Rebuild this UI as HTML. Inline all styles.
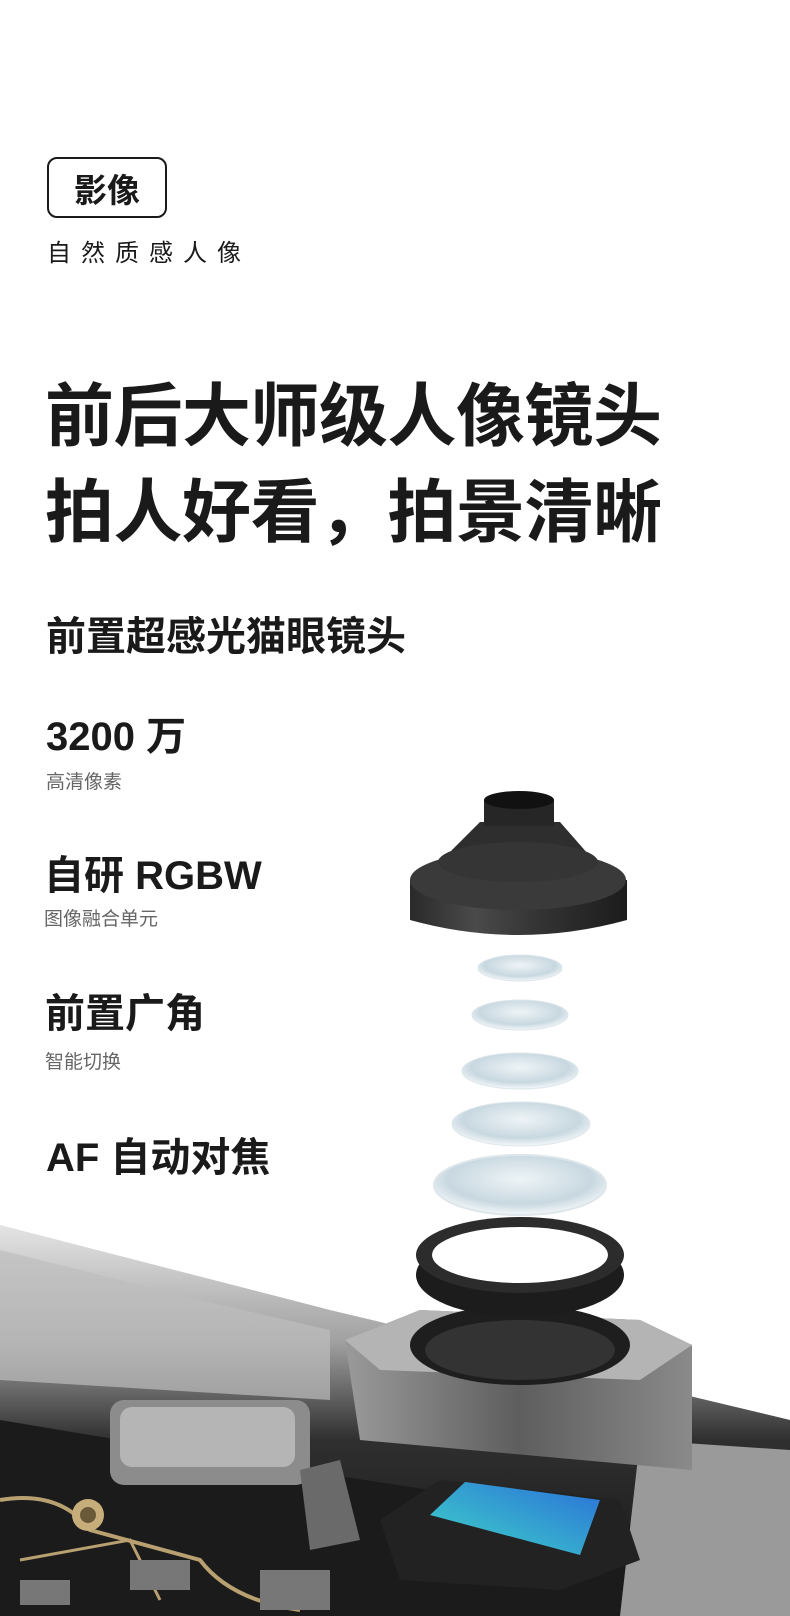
<!DOCTYPE html>
<html><head><meta charset="utf-8"><style>
*{margin:0;padding:0}
body{width:790px;height:1616px;background:#fff;position:relative;overflow:hidden;font-family:"Liberation Sans","Noto Sans CJK SC",sans-serif;color:#1a1a1a}
.a{position:absolute;white-space:nowrap;line-height:1}
.box{position:absolute;left:47px;top:157px;width:116px;height:57px;border:2.5px solid #1a1a1a;border-radius:10px;font-weight:700;font-size:33px;display:flex;align-items:center;justify-content:center}
svg{position:absolute;left:0;top:0}
</style></head><body>
<svg width="790" height="1616" viewBox="0 0 790 1616">
<defs>
<linearGradient id="pcb" x1="0" y1="0" x2="0" y2="1"><stop offset="0" stop-color="#e4e4e4"/><stop offset="0.3" stop-color="#a0a0a0"/><stop offset="0.55" stop-color="#2f2f2f"/><stop offset="1" stop-color="#151515"/></linearGradient>
<linearGradient id="barrel" x1="0" y1="0" x2="1" y2="0"><stop offset="0" stop-color="#2a2a2a"/><stop offset="0.3" stop-color="#4a4a4a"/><stop offset="0.6" stop-color="#333"/><stop offset="1" stop-color="#1c1c1c"/></linearGradient>
<linearGradient id="box" x1="0" y1="0" x2="1" y2="0"><stop offset="0" stop-color="#9a9a9a"/><stop offset="0.5" stop-color="#5e5e5e"/><stop offset="1" stop-color="#8a8a8a"/></linearGradient>
<linearGradient id="sens" x1="0" y1="1" x2="1" y2="0"><stop offset="0" stop-color="#3fd6c8"/><stop offset="1" stop-color="#2a6fd8"/></linearGradient>
<radialGradient id="lens" cx="0.5" cy="0.4" r="0.6"><stop offset="0" stop-color="#eef4f7"/><stop offset="0.7" stop-color="#c8d8e0"/><stop offset="1" stop-color="#f4f8fa"/></radialGradient>
</defs>
<polygon points="0,1225 330,1310 790,1420 790,1616 0,1616" fill="url(#pcb)"/>
<polygon points="0,1250 200,1300 330,1330 330,1400 0,1380" fill="#bdbdbd" opacity="0.7"/>
<polygon points="0,1420 300,1470 560,1510 790,1560 790,1616 0,1616" fill="#1b1b1b"/>
<rect x="110" y="1400" width="200" height="85" rx="14" fill="#8c8c8c"/>
<rect x="120" y="1407" width="175" height="60" rx="12" fill="#b5b5b5"/>
<path d="M0 1500 Q60 1490 90 1530 L200 1560 Q230 1600 300 1610" stroke="#b8a070" stroke-width="4" fill="none"/>
<path d="M20 1560 L130 1540 L160 1600" stroke="#b8a070" stroke-width="3" fill="none"/>
<circle cx="88" cy="1515" r="16" fill="#c7ad7a"/><circle cx="88" cy="1515" r="8" fill="#6a5a3a"/>
<g fill="#777"><rect x="130" y="1560" width="60" height="30"/><rect x="260" y="1570" width="70" height="40"/><rect x="20" y="1580" width="50" height="25"/></g>
<polygon points="640,1440 790,1450 790,1616 620,1616" fill="#9a9a9a"/>
<polygon points="300,1470 340,1460 360,1540 310,1550" fill="#6a6a6a"/>
<polygon points="345,1340 420,1310 640,1320 692,1345 692,1470 360,1440" fill="url(#box)"/>
<polygon points="345,1340 420,1310 640,1320 692,1345 640,1380 380,1370" fill="#b4b4b4"/>
<ellipse cx="520" cy="1345" rx="110" ry="40" fill="#1e1e1e"/>
<ellipse cx="520" cy="1350" rx="95" ry="30" fill="#333"/>
<polygon points="380,1520 440,1480 620,1500 640,1560 560,1590 400,1580" fill="#222"/>
<polygon points="430,1515 465,1482 600,1500 580,1555" fill="url(#sens)"/>
<ellipse cx="520" cy="1275" rx="104" ry="42" fill="#1c1c1c"/>
<ellipse cx="520" cy="1255" rx="104" ry="38" fill="#2c2c2c"/>
<ellipse cx="520" cy="1255" rx="88" ry="28" fill="#fff"/>
<ellipse cx="520" cy="968" rx="42" ry="13" fill="url(#lens)" stroke="#dde6ea"/>
<ellipse cx="520" cy="1015" rx="48" ry="15" fill="url(#lens)" stroke="#dde6ea"/>
<ellipse cx="520" cy="1071" rx="58" ry="18" fill="url(#lens)" stroke="#dde6ea"/>
<ellipse cx="521" cy="1124" rx="69" ry="22" fill="url(#lens)" stroke="#dde6ea"/>
<ellipse cx="520" cy="1185" rx="86" ry="30" fill="url(#lens)" stroke="#dde6ea" stroke-width="2"/>
<path d="M410 880 L410 920 Q518 950 627 920 L627 880 Z" fill="url(#barrel)"/>
<ellipse cx="518" cy="880" rx="108" ry="30" fill="#3a3a3a"/>
<path d="M440 862 L480 822 L560 822 L595 862 Z" fill="#2e2e2e"/>
<ellipse cx="518" cy="862" rx="80" ry="20" fill="#353535"/>
<rect x="484" y="800" width="70" height="26" fill="#262626"/>
<ellipse cx="519" cy="800" rx="35" ry="9" fill="#111"/>
</svg>
<div class="box">影像</div>
<div class="a" style="left:47px;top:242px;font-size:24px;letter-spacing:10px">自然质感人像</div>
<div class="a" style="left:45px;top:382px;font-size:69px;font-weight:700;letter-spacing:-0.5px">前后大师级人像镜头</div>
<div class="a" style="left:45px;top:478px;font-size:69px;font-weight:700;letter-spacing:-0.5px">拍人好看，拍景清晰</div>
<div class="a" style="left:46px;top:617px;font-size:40px;font-weight:700">前置超感光猫眼镜头</div>
<div class="a" style="left:46px;top:717px;font-size:40px;font-weight:700">3200 万</div>
<div class="a" style="left:46px;top:773px;font-size:19px;color:#666">高清像素</div>
<div class="a" style="left:44px;top:856px;font-size:40px;font-weight:700">自研 RGBW</div>
<div class="a" style="left:44px;top:910px;font-size:19px;color:#666">图像融合单元</div>
<div class="a" style="left:45px;top:994px;font-size:40px;font-weight:700">前置广角</div>
<div class="a" style="left:45px;top:1053px;font-size:19px;color:#666">智能切换</div>
<div class="a" style="left:46px;top:1138px;font-size:40px;font-weight:700">AF 自动对焦</div>
</body></html>
